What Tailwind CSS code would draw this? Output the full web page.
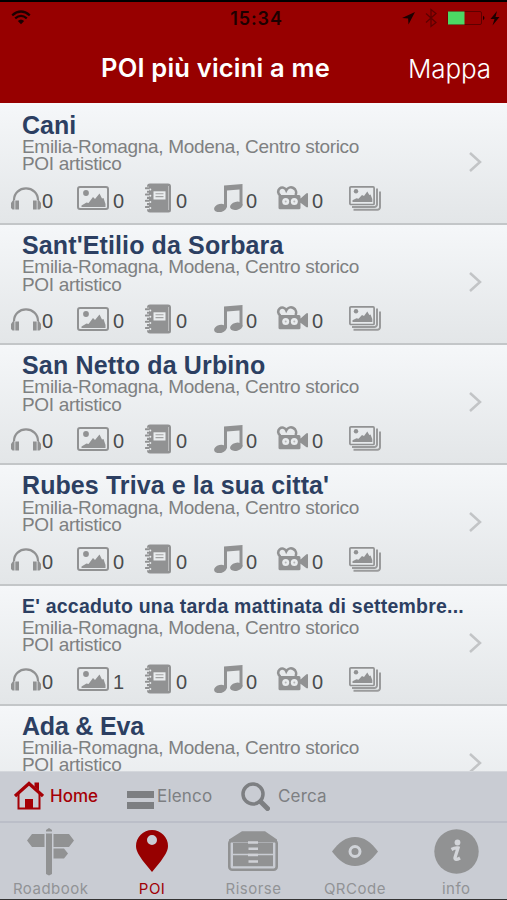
<!DOCTYPE html>
<html lang="it">
<head>
<meta charset="utf-8">
<title>POI più vicini a me</title>
<script src="https://cdn.jsdelivr.net/npm/@tailwindcss/browser@4"></script>
</head>
<body class="w-[507px] h-[900px] overflow-hidden bg-[#c9ccd3] font-['Inter',sans-serif]">
<svg class="hidden">
  <symbol id="phones" viewBox="0 0 30 23"><path d="M3 13C3 6 8.500 1.400 15 1.400S27 6 27 13" fill="none" stroke="#919293" stroke-width="2.200"/><path d="M2.500 12.500 0 16v5l1.500 1.500h2v-9.500zM27.500 12.500 30 16v5l-1.500 1.500h-2v-9.500z" fill="#919293"/><path d="M4.300 13.500h3.700v9H4.300zM22 13.500h3.700v9H22z" fill="#919293"/></symbol>
  <symbol id="photo" viewBox="0 0 32 24"><rect x="1" y="1" width="30" height="22" rx="2" fill="none" stroke="#919293" stroke-width="2"/><circle cx="9" cy="7" r="2.900" fill="#919293"/><path d="M4.500 21v-1.500l5-3 2 .5 4.500-6 2 2 4.500-5.500 2.500 5 1.500-.5 2 6v3z" fill="#919293"/></symbol>
  <symbol id="book" viewBox="0 0 27 30"><path d="M5 .5h18a3 3 0 0 1 3 3V27a2.500 2.500 0 0 1-2.500 2.500H5a3 3 0 0 1-3-3V3.500a3 3 0 0 1 3-3z" fill="#919293"/><path d="M23.500 3v24" stroke="#c5c7c8" stroke-width=".8"/><path d="M0 5.800h4M0 11.800h4M0 18h4M0 24.200h4" stroke="#e9ecee" stroke-width="4"/><path d="M.8 5.200h5M.8 11.500h5M.8 17.800h5M.8 24h5" stroke="#919293" stroke-width="2.100" stroke-linecap="round"/><circle cx="5.300" cy="6.600" r="1" fill="#e9ecee"/><circle cx="5.300" cy="12.800" r="1" fill="#e9ecee"/><circle cx="5.300" cy="19" r="1" fill="#e9ecee"/><circle cx="5.300" cy="25" r="1" fill="#e9ecee"/><path d="M8.500 8.300h12v8.200h-12z" fill="#e9ecee"/><path d="M10.500 10.800h8M10.500 13.600h8" stroke="#a2a3a4" stroke-width="1.100"/></symbol>
  <symbol id="music" viewBox="0 0 29 28"><path d="M10 1.600 28.500 0v21.500h-3V5.500L13 6.600v17h-3z" fill="#919293"/><ellipse cx="6.300" cy="24" rx="6.300" ry="4" transform="rotate(-14 6.300 24)" fill="#919293"/><ellipse cx="22.300" cy="21.800" rx="6.300" ry="4" transform="rotate(-14 22.300 21.800)" fill="#919293"/></symbol>
  <symbol id="camera" viewBox="0 0 32 24"><path d="M4.500 9.500A4.200 4.200 0 1 1 10.300 4.200 5 5 0 1 1 19.500 9" fill="none" stroke="#919293" stroke-width="2.600"/><path d="M4.500 9h18.500a1.500 1.500 0 0 1 1.500 1.500v2l6-5.300h1.500v14h-1.500l-6-4.500v5a1.500 1.500 0 0 1-1.500 1.500H4A1.500 1.500 0 0 1 2.500 21.700V10.500A1.500 1.500 0 0 1 4 9z" fill="#919293"/><circle cx="9.700" cy="15.500" r="3.500" fill="#e9ecee"/><circle cx="18.300" cy="15.500" r="3.500" fill="#e9ecee"/><circle cx="9.700" cy="15.500" r="1" fill="#b5b6b7"/><circle cx="18.300" cy="15.500" r="1" fill="#b5b6b7"/></symbol>
  <symbol id="stack" viewBox="0 0 32 25"><path d="M4.500 23.700h24a2.500 2.500 0 0 0 2.500-2.500V5.500M3 21h22.500a2.500 2.500 0 0 0 2.500-2.500V2.500" fill="none" stroke="#9a9b9c" stroke-width="2"/><rect x=".9" y=".9" width="24.200" height="17.600" rx="1" fill="none" stroke="#919293" stroke-width="1.700"/><circle cx="7" cy="5.300" r="2.200" fill="#919293"/><path d="M3.500 16v-1.800l4-2 2 .5 3.500-3.700 2 1 3.300-4.500 2 3.500 1.200-.4 1.800 4.400V16z" fill="#919293"/></symbol>
</svg>

<div class="flex h-[900px] w-full flex-col">
  <header class="h-[103px] shrink-0 border-t-2 border-black bg-[#970000]">
    <div class="grid h-[32px] grid-cols-3 items-center">
      <svg class="ml-[11px] h-[15px] w-[20px] -mt-[2px]" viewBox="0 0 20 15"><path d="M1.200 5.300Q10-2.300 18.800 5.300M4.200 8.400Q10 3.300 15.800 8.400" fill="none" stroke="#1d0000" stroke-width="2.300"/><path d="M6.800 11Q10 8 13.200 11L10 14.300z" fill="#1d0000"/></svg>
      <div class="pl-1.5 text-center text-[18px] font-semibold tracking-[0.9px] text-[#1d0000]">15:34</div>
      <svg class="h-[20px] w-[105px] justify-self-end -mt-px" viewBox="0 0 105 20"><path d="M13 4 6.500 16.500 6.100 10.400 0 10z" fill="#1d0000"/><path d="m24 5.500 10 9-5 4V1.500l5 4-10 9" fill="none" stroke="#5e0000" stroke-width="1.300"/><rect x="46" y="3.500" width="33.500" height="13" rx="1.500" fill="none" stroke="#5e0000"/><path d="M46 3.500H62.500v13H46z" fill="#4cd964"/><path d="M81 7.800q3 2.200 0 4.400z" fill="#1d0000"/><path d="m95 3-6.500 8h4l-2 6.500L97.500 9h-4z" fill="#1d0000"/></svg>
    </div>
    <div class="flex h-[69px] items-center justify-between pl-[101px] pr-[16px] text-white">
      <h1 class="text-[25.5px] font-semibold tracking-[0.2px] whitespace-nowrap">POI più vicini a me</h1>
      <span class="text-[26px] tracking-[-0.1px] font-light">Mappa</span>
    </div>
  </header>
  <main id="list" class="h-[668px] shrink-0 overflow-hidden pt-[1.8px] bg-[#f8f9fa]"></main>
  <nav class="flex h-[50px] shrink-0 items-center border-t border-[#d4d7dc] bg-[#c9ccd3] text-[17px] leading-[20px] text-[#7d7f82]">
    <div class="ml-[14px] flex w-[113px] items-center font-medium text-[#a50006]">
      <svg class="mr-[6px] -mt-[2px] h-[29px] w-[30px]" viewBox="0 0 30 29"><path d="M4.500 13v14.500h21V13" fill="none" stroke="#a50006" stroke-width="2"/><path d="M1 15 15 2.500 29 15" fill="none" stroke="#a50006" stroke-width="3.300"/><path d="M20.500 1.500h4.500v8l-4.500-4zM11 18h8v9.500h-8z" fill="#a50006"/></svg>
      <span class="-mt-px">Home</span>
    </div>
    <div class="flex w-[114px] items-center">
      <svg class="mt-[6px] mr-[3px] h-[18px] w-[27px]" viewBox="0 0 27 18"><path d="M0 0h27v7H0zM0 11h27v7H0z" fill="#7d7f82"/></svg>
      <span class="-mt-px tracking-[0.2px]">Elenco</span>
    </div>
    <div class="flex items-center">
      <svg class="mr-[8px] -mt-px h-[29px] w-[29px]" viewBox="0 0 29 29"><circle cx="12" cy="12" r="10" fill="none" stroke="#7d7f82" stroke-width="3.500"/><path d="m19.500 19.500 7 7" stroke="#7d7f82" stroke-width="5" stroke-linecap="round"/></svg>
      <span class="-mt-px tracking-[0.2px]">Cerca</span>
    </div>
  </nav>
  <footer class="grid h-[79px] shrink-0 grid-cols-5 border-t-2 border-b border-t-[#bbbec8] border-b-[#333] bg-[#c9ccd3] text-center text-[15px] tracking-[0.5px] text-[#919396]">
    <div class="flex flex-col items-center justify-between pt-[5px]">
      <svg class="h-[48px] w-[48px]" viewBox="0 0 48 48"><path d="M19 3.500V2l3-2 3 2v1.500zM19 5.500h6V46l-3 1.500L19 46zM5 6h12.500v13H5L0 12.500zM26.500 6H42l5 6.500L42 19H26.500zM26.500 20.500H37l4 5-4 5H26.500z" fill="#919293"/></svg>
      <span class="leading-[20px]">Roadbook</span>
    </div>
    <div class="flex flex-col items-center justify-between pt-[7px] text-[#a00006]">
      <svg class="h-[42px] w-[32px]" viewBox="0 0 32 42"><path fill-rule="evenodd" d="M16 0a16 16 0 0 1 16 16c0 6-4.500 11-7 15L16 42 7 31C4.500 27 0 22 0 16A16 16 0 0 1 16 0m0 5a5 5 0 1 0 0 10 5 5 0 0 0 0-10" fill="#970000"/></svg>
      <span class="leading-[20px]">POI</span>
    </div>
    <div class="flex flex-col items-center justify-between pt-[8px]">
      <svg class="h-[40px] w-[50px]" viewBox="0 0 50 40"><path d="M14 .3h23L49 8.500v3H1v-3z" fill="#919293"/><rect x="1.300" y="9.300" width="47.400" height="29.400" rx="3" fill="none" stroke="#919293" stroke-width="2.600"/><path d="M5 12h40v10.800H5zM5 24.300h40v10.900H5z" fill="#919293"/><path d="M20 11.500h10M20.500 17.700h9.500M20 24h10M20.500 30.500h9.500" fill="none" stroke="#cfd1d6" stroke-width="2.500"/></svg>
      <span class="leading-[20px]">Risorse</span>
    </div>
    <div class="flex flex-col items-center justify-between pt-[14px]">
      <svg class="h-[29px] w-[46px]" viewBox="0 0 46 29"><path d="M0 14.500C7 5 14 0 23 0s16 5 23 14.500C39 24 32 29 23 29S7 24 0 14.500" fill="#919293"/><circle cx="23" cy="14.500" r="5" fill="none" stroke="#d0d3d8" stroke-width="3"/></svg>
      <span class="leading-[20px]">QRCode</span>
    </div>
    <div class="flex flex-col items-center justify-between pt-[6px]">
      <svg class="h-[45px] w-[45px]" viewBox="0 0 45 45"><circle cx="22.500" cy="22.500" r="22.200" fill="#919293"/><circle cx="23.500" cy="13.500" r="2.900" fill="#d3d5d9"/><path d="M17.500 20.500Q21 18.500 24 19L21 28.500Q20.500 32 26 29" fill="none" stroke="#d3d5d9" stroke-width="3.300"/></svg>
      <span class="leading-[20px]">info</span>
    </div>
  </footer>
</div>

<script>
const places = [
  ["Cani", 0, "text-[25px]"],
  ["Sant'Etilio da Sorbara", 0, "text-[25px] tracking-[0.12px]"],
  ["San Netto da Urbino", 0, "text-[25px] tracking-[0.16px]"],
  ["Rubes Triva e la sua citta'", 0, "text-[25px] tracking-[0.09px]"],
  ["E' accaduto una tarda mattinata di settembre...", 1, "text-[19.5px] tracking-[0.22px]"],
  ["Ada & Eva", null, "text-[25px] tracking-[-0.2px]"]
];
const strip = photos => `
    <div class="flex h-[30px] mt-[10.5px] pl-[11px] items-center text-[20px] leading-[22px] text-[#4a4c4e]">
      <div class="flex w-[66px] items-center"><svg class="h-[23px] w-[30px] mt-[1px]"><use href="#phones"/></svg><span class="ml-[1px] mt-[5px]">0</span></div>
      <div class="flex w-[68px] items-center"><svg class="h-[24px] w-[32px]"><use href="#photo"/></svg><span class="ml-[4px] mt-[5px]">${photos}</span></div>
      <div class="flex w-[69px] items-center"><svg class="h-[30px] w-[27px]"><use href="#book"/></svg><span class="ml-[4px] mt-[5px]">0</span></div>
      <div class="flex w-[62px] items-center"><svg class="h-[28px] w-[29px]"><use href="#music"/></svg><span class="ml-[3px] mt-[5px]">0</span></div>
      <div class="flex w-[73px] items-center"><svg class="h-[24px] w-[32px] -mt-px"><use href="#camera"/></svg><span class="ml-[4px] mt-[5px]">0</span></div>
      <svg class="h-[25px] w-[32px]"><use href="#stack"/></svg>
    </div>`;
document.getElementById("list").innerHTML = places.map(([name, photos, size]) => `
  <article class="relative h-[120.2px] border-b-2 border-[#c3c6c8] bg-linear-to-b from-[#f5f7f9] to-[#e3e6e8] font-['Liberation_Sans',sans-serif]">
    <h2 class="pl-[22px] pt-[5px] h-[33.2px] leading-[30px] font-bold text-[#2c3f62] whitespace-nowrap ${size}">${name.replace("&", "&amp;")}</h2>
    <p class="pl-[22px] text-[19px] leading-[17.5px] tracking-[-0.3px] text-[#7e8081]">Emilia-Romagna, Modena, Centro storico<br>POI artistico</p>${photos === null ? "" : strip(photos)}
    <svg class="absolute left-[469px] top-[47px] h-[20px] w-[13px]" viewBox="0 0 13 20"><path d="m1 1 10 9-10 9" fill="none" stroke="#c2c4c6" stroke-width="2.500"/></svg>
  </article>`).join("");
</script>
</body>
</html>
